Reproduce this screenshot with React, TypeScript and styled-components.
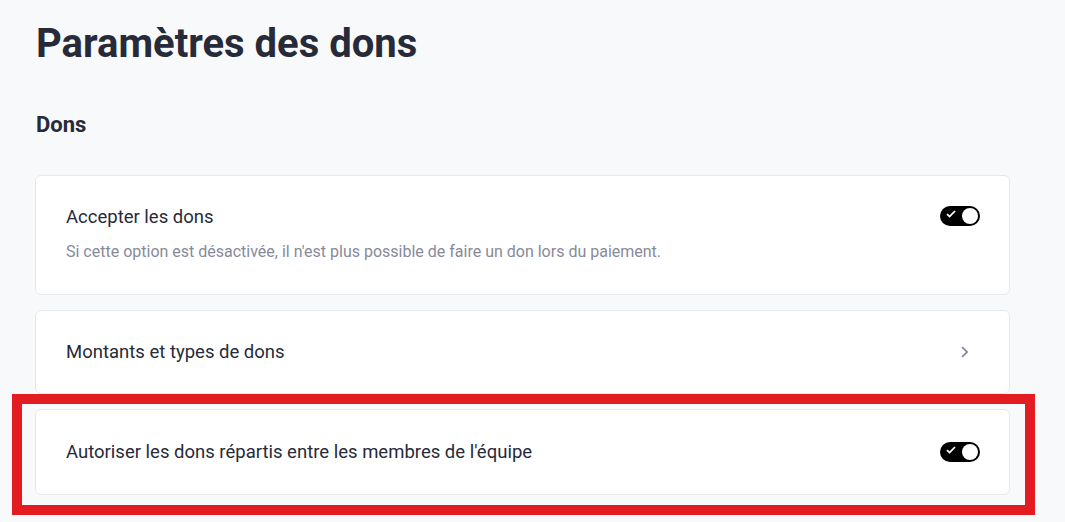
import React, { useState } from 'react';
import styled, { createGlobalStyle } from 'styled-components';

const GlobalStyle = createGlobalStyle`
  html, body {
    margin: 0;
    padding: 0;
    background: #f8f9fb;
  }
  body {
    font-family: "Roboto", "Liberation Sans", sans-serif;
    color: #272a38;
  }
`;

const Page = styled.main`
  width: 975px;
  padding: 20px 0 40px 35px;
`;

const Title = styled.h1`
  margin: 0 0 43px 1px;
  font-size: 40px;
  line-height: 48px;
  font-weight: 700;
  color: #272a38;
`;

const SectionTitle = styled.h2`
  margin: 0 0 36px 1px;
  font-size: 22px;
  line-height: 28px;
  font-weight: 700;
  color: #272a38;
`;

const List = styled.div`
  display: flex;
  flex-direction: column;
  gap: 15px;
`;

const Card = styled.div<{ $top?: boolean; $tall?: boolean }>`
  position: relative;
  display: flex;
  align-items: ${(p) => (p.$top ? 'flex-start' : 'center')};
  justify-content: space-between;
  box-sizing: border-box;
  min-height: ${(p) => (p.$tall ? '86px' : '84px')};
  padding: 30px;
  background: #fff;
  border: 1px solid #e7e8ec;
  border-radius: 6px;
`;

const Highlight = styled.div`
  position: absolute;
  top: -16px;
  left: -24px;
  right: -26px;
  bottom: -21px;
  border: 10px solid #e31c22;
  pointer-events: none;
`;

const Text = styled.div`
  display: flex;
  flex-direction: column;
  gap: 12px;
`;

const Label = styled.div`
  font-size: 18.5px;
  line-height: 22px;
  color: #272a38;
`;

const Hint = styled.div`
  font-size: 16px;
  line-height: 24px;
  color: #878a99;
`;

const Switch = styled.button<{ $on: boolean }>`
  position: relative;
  width: 40px;
  height: 20px;
  margin: 0 -1px 0 0;
  padding: 0;
  border: none;
  border-radius: 10px;
  background: ${(p) => (p.$on ? '#000' : '#c9cbd3')};
  cursor: pointer;
  flex-shrink: 0;

  &::after {
    content: '';
    position: absolute;
    top: 2px;
    left: ${(p) => (p.$on ? '22px' : '2px')};
    width: 16px;
    height: 16px;
    border-radius: 50%;
    background: #fff;
  }

  svg {
    position: absolute;
    left: 6px;
    top: 4px;
  }
`;

const Chevron = styled.span`
  display: flex;
  margin-right: 11px;
  color: #7b7e9c;
`;

const Toggle: React.FC<{ initial?: boolean }> = ({ initial = true }) => {
  const [on, setOn] = useState(initial);
  return (
    <Switch $on={on} onClick={() => setOn(!on)} aria-pressed={on}>
      {on && (
        <svg width="10" height="8" viewBox="0 0 10 8">
          <polyline points="1,4.2 3.6,6.6 9,1" fill="none" stroke="#fff" strokeWidth="1.8" />
        </svg>
      )}
    </Switch>
  );
};

export default function App() {
  return (
    <>
      <GlobalStyle />
      <Page>
        <Title>Paramètres des dons</Title>
        <SectionTitle>Dons</SectionTitle>
        <List>
          <Card $top>
            <Text>
              <Label>Accepter les dons</Label>
              <Hint>Si cette option est désactivée, il n'est plus possible de faire un don lors du paiement.</Hint>
            </Text>
            <Toggle />
          </Card>
          <Card>
            <Label>Montants et types de dons</Label>
            <Chevron>
              <svg width="7" height="12" viewBox="0 0 7 12">
                <polyline points="1,1 6,6 1,11" fill="none" stroke="currentColor" strokeWidth="1.6" />
              </svg>
            </Chevron>
          </Card>
          <Card $tall>
            <Label>Autoriser les dons répartis entre les membres de l'équipe</Label>
            <Toggle />
            <Highlight />
          </Card>
        </List>
      </Page>
    </>
  );
}
